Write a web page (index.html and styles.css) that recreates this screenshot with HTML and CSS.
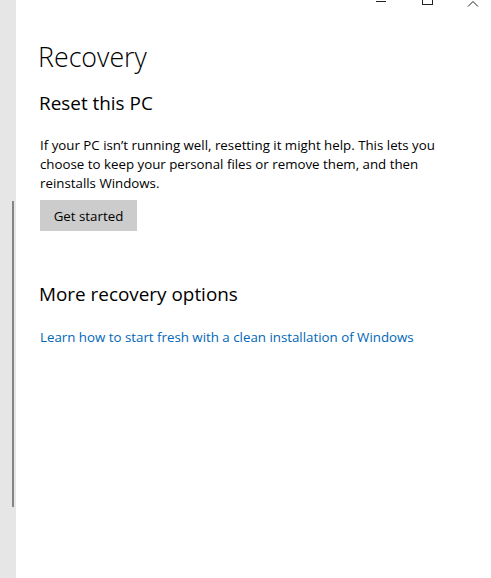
FILE: index.html
```html
<!DOCTYPE html>
<html lang="en">
<head>
    <meta charset="UTF-8">
    <title>Recovery</title>
    <link rel="stylesheet" href="styles.css">
</head>
<body>
    <div class="window">
        <div class="side">
            <div class="scroll-thumb"></div>
        </div>
        <div class="main">
            <div class="caption">
                <span class="caption-btn">
                    <svg width="12" height="12" viewBox="0 0 12 12"><path d="M1 1.5h10" stroke="#222" stroke-width="1" fill="none"/></svg>
                </span>
                <span class="caption-btn">
                    <svg width="12" height="12" viewBox="0 0 12 12"><rect x="1.5" y="-5.5" width="10" height="10" stroke="#222" stroke-width="1" fill="none"/></svg>
                </span>
                <span class="caption-btn">
                    <svg width="12" height="12" viewBox="0 0 12 12"><path d="M1 6.5L6 1.5L11 6.5" stroke="#222" stroke-width="1" fill="none"/></svg>
                </span>
            </div>

            <h1>Recovery</h1>

            <h2>Reset this PC</h2>
            <p class="desc">If your PC isn’t running well, resetting it might help. This lets you choose to keep your personal files or remove them, and then reinstalls Windows.</p>
            <button class="btn">Get started</button>

            <h2 class="more">More recovery options</h2>
            <a class="link" href="#">Learn how to start fresh with a clean installation of Windows</a>
        </div>
    </div>
</body>
</html>
```

FILE: styles.css
```css
/* General styles */
body {
    margin: 0;
    padding: 0;
    font-family: "Open Sans", "Noto Sans", sans-serif;
    background-color: #fff;
    color: #000;
}

.window {
    display: flex;
    width: 491px;
    height: 578px;
    overflow: hidden;
}

/* Left strip with scrollbar */
.side {
    width: 16px;
    flex-shrink: 0;
    background-color: #e6e6e6;
    position: relative;
}

.scroll-thumb {
    position: absolute;
    left: 12px;
    top: 201px;
    width: 2px;
    height: 306px;
    background-color: #858585;
}

.main {
    flex: 1;
    padding-left: 22px;
}

/* Title bar buttons */
.caption {
    display: flex;
    justify-content: flex-end;
    height: 12px;
    margin-right: -5px;
}

.caption-btn {
    width: 46px;
    display: flex;
    justify-content: center;
}

/* Headings */
h1 {
    font-size: 26.8px;
    font-weight: 300;
    margin: 27px 0 0 0;
    line-height: 36px;
}

h2 {
    font-size: 18.9px;
    font-weight: 400;
    margin: 14px 0 0 1px;
    line-height: 28px;
}

h2.more {
    margin-top: 49px;
}

.desc {
    font-size: 13.3px;
    line-height: 19px;
    margin: 19px 0 0 2px;
    width: 405px;
}

.btn {
    margin: 7px 0 0 2px;
    width: 97px;
    height: 31px;
    border: none;
    background-color: #cccccc;
    font-family: inherit;
    font-size: 13.3px;
    color: #000;
    padding: 0;
}

.link {
    display: block;
    margin: 20px 0 0 2px;
    font-size: 13.3px;
    line-height: 19px;
    color: #0067b8;
    text-decoration: none;
}
```
